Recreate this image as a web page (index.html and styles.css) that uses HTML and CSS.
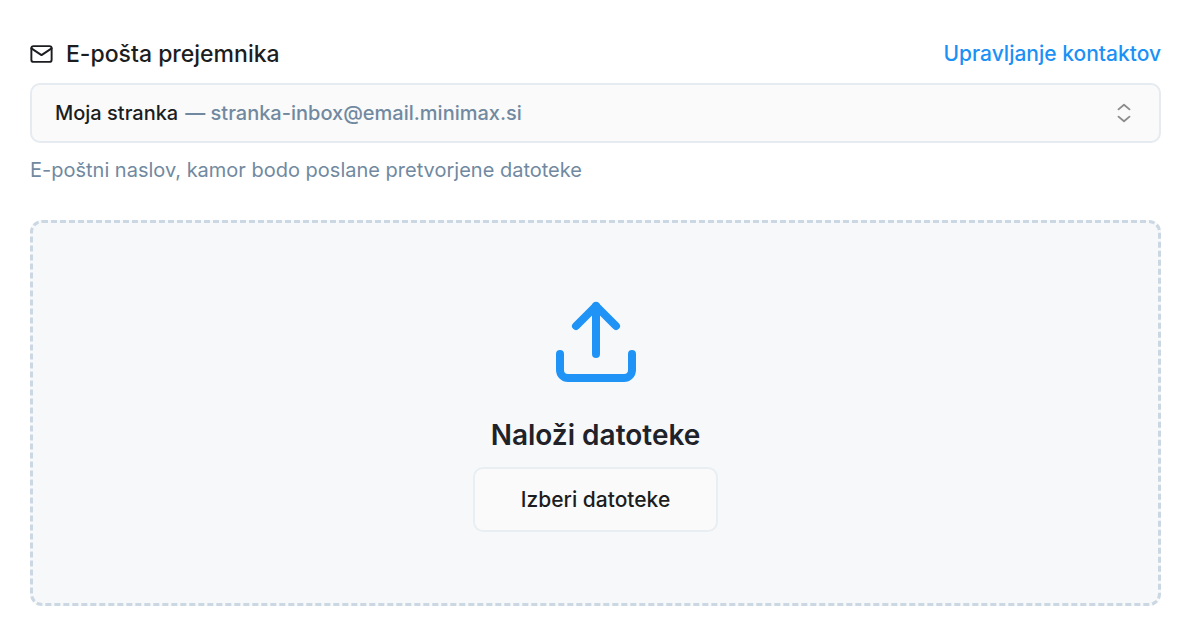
FILE: index.html
```html
<!DOCTYPE html>
<html lang="sl">
  <head>
    <meta charset="UTF-8" />
    <meta name="viewport" content="width=device-width, initial-scale=1.0" />
    <title>Nalaganje datotek</title>
    <link rel="stylesheet" href="styles.css" />
  </head>
  <body>
    <form class="upload-form">
      <div class="field-header">
        <label class="field-label" for="recipient">
          <svg class="mail-icon" viewBox="2 4 20 16" aria-hidden="true">
            <rect x="3" y="5" width="18" height="14" rx="2" />
            <path d="m3 7 9 6 9-6" />
          </svg>
          E-pošta prejemnika
        </label>
        <a class="manage-link" href="#">Upravljanje kontaktov</a>
      </div>

      <div class="select-box">
        <select class="select" id="recipient" name="recipient" aria-describedby="recipient-help">
          <option value="stranka-inbox@email.minimax.si">Moja stranka</option>
        </select>
        <div class="select-value" aria-hidden="true">
          <span class="select-name">Moja stranka</span>
          <span class="select-email">— stranka-inbox@email.minimax.si</span>
          <svg class="chevrons-icon" viewBox="0 0 24 24">
            <path d="m6 16 6 5 6-5" />
            <path d="m6 8 6-5 6 5" />
          </svg>
        </div>
      </div>
      <p class="help-text" id="recipient-help">E-poštni naslov, kamor bodo poslane pretvorjene datoteke</p>

      <div class="dropzone">
        <svg class="upload-icon" viewBox="0 0 24 24" aria-hidden="true">
          <path d="M21 15v4a2 2 0 0 1-2 2H5a2 2 0 0 1-2-2v-4" />
          <path d="m17 8-5-5-5 5" />
          <path d="M12 3v12" />
        </svg>
        <h2 class="dropzone-title">Naloži datoteke</h2>
        <button class="choose-button" type="button">Izberi datoteke</button>
      </div>
    </form>
  </body>
</html>
```
FILE: styles.css
```css
body {
  margin: 0;
  background-color: #fff;
  color: #1c1d20;
  font-family: Inter, "Liberation Sans", sans-serif;
  font-size: 20px;
  line-height: 30px;
}

svg {
  fill: none;
  stroke: currentColor;
  stroke-width: 2;
  stroke-linecap: round;
  stroke-linejoin: round;
}

.upload-form {
  padding: 39px 39px 36px 30px;
}

.field-header {
  display: flex;
  justify-content: space-between;
  align-items: center;
  margin-bottom: 14px;
}

.field-label {
  display: flex;
  align-items: center;
  gap: 13px;
  font-size: 23px;
  font-weight: 500;
}

.mail-icon {
  width: 23px;
  height: 18px;
  stroke-width: 1.7;
}

.manage-link {
  color: #1c91f5;
  font-size: 21px;
  font-weight: 500;
  text-decoration: none;
}

/* the select and its two-colour value share one grid cell */
.select-box {
  display: grid;
}

.select,
.select-value {
  grid-area: 1 / 1;
}

.select {
  appearance: none;
  width: 100%;
  height: 60px;
  border: 2px solid #e5ebf0;
  border-radius: 10px;
  background-color: #fafafa;
  color: transparent;
  font: inherit;
  cursor: pointer;
}

.select-value {
  display: flex;
  align-items: center;
  gap: 7px;
  padding: 0 26px 0 25px;
  font-weight: 500;
  pointer-events: none;
}

.select-email {
  color: #7189a0;
}

.chevrons-icon {
  width: 22px;
  height: 22px;
  margin-left: auto;
  color: #8b8b8b;
}

.help-text {
  margin: 12px 0 35px;
  color: #7189a0;
}

.dropzone {
  display: flex;
  flex-direction: column;
  align-items: center;
  padding: 71px 24px;
  border: 3px dashed #cbd7e2;
  border-radius: 12px;
  background-color: #f6f8fa;
}

.upload-icon {
  width: 96px;
  height: 96px;
  color: #2094f6;
}

.dropzone-title {
  margin: 25px 0 12px;
  color: #1f2228;
  font-size: 28px;
  font-weight: 600;
  line-height: 40px;
}

.choose-button {
  padding: 16px 46px;
  border: 2px solid #e9eef2;
  border-radius: 10px;
  background-color: #fafafa;
  color: inherit;
  font: inherit;
  font-size: 21px;
  font-weight: 500;
  line-height: 29px;
  cursor: pointer;
}
```
